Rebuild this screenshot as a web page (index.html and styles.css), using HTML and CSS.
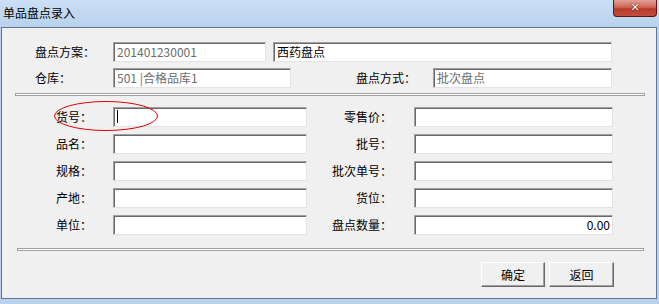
FILE: index.html
```html
<!DOCTYPE html>
<html>
	<head>
		<meta charset="UTF-8">
		<title>单品盘点录入</title>
		<link rel="stylesheet" href="styles.css">
	</head>
	<body>
		<div class="win">
			<div class="title">
				<span>单品盘点录入</span>
				<i class="close">&#x2715;</i>
			</div>
			<div class="client">
				<!--盘点方案-->
				<div class="head">
					<div class="row">
						<label class="lab">盘点方案：</label>
						<div class="field gray w1">201401230001</div>
						<div class="field w2">西药盘点</div>
					</div>
					<div class="row">
						<label class="lab">仓库：</label>
						<div class="field gray w3">501 |合格品库1</div>
						<label class="lab2">盘点方式：</label>
						<div class="field gray w4">批次盘点</div>
					</div>
				</div>
				<div class="line line1"></div>

				<!--商品信息-->
				<div class="form">
					<label>货号：</label>
					<div class="field"><em class="caret"></em></div>
					<label class="r">零售价：</label>
					<div class="field"></div>

					<label>品名：</label>
					<div class="field"></div>
					<label class="r">批号：</label>
					<div class="field"></div>

					<label>规格：</label>
					<div class="field"></div>
					<label class="r">批次单号：</label>
					<div class="field"></div>

					<label>产地：</label>
					<div class="field"></div>
					<label class="r">货位：</label>
					<div class="field"></div>

					<label>单位：</label>
					<div class="field"></div>
					<label class="r">盘点数量：</label>
					<div class="field num">0.00</div>
				</div>
				<div class="line line2"></div>

				<div class="btns">
					<button>确定</button>
					<button class="back">返回</button>
				</div>

				<svg class="mark" width="104" height="30" viewBox="0 0 104 30">
					<ellipse cx="52" cy="15" rx="51.5" ry="14.5" fill="none" stroke="#e00000" stroke-width="1"/>
				</svg>
			</div>
		</div>
	</body>
</html>
```
FILE: styles.css
```css
body{
	margin: 0;
	background: #bad2ec;
	font: 12px/20px "Noto Sans CJK SC", sans-serif;
	color: #000;
	overflow: hidden;
}
.win{
	width: 659px;
	height: 304px;
}
.title{
	height: 27px;
	display: flex;
	justify-content: space-between;
	align-items: flex-start;
	background: linear-gradient(#cbdff5, #b9d1ec);
}
.title span{
	padding-left: 3px;
	line-height: 26px;
}
.close{
	width: 44px;
	height: 17px;
	margin-right: 2px;
	box-sizing: border-box;
	border: 1px solid #5a1711;
	border-top: 0;
	border-radius: 0 0 4px 4px;
	background: linear-gradient(#e2a196, #cf6656 45%, #b83a2c 55%, #c34d3e);
	color: #fff;
	font: bold 11px/16px "DejaVu Sans", sans-serif;
	font-style: normal;
	text-align: center;
	text-shadow: 0 0 1px #4a0c05, 0 0 1px #4a0c05;
}
.client{
	position: relative;
	width: 654px;
	height: 270px;
	margin-left: 1px;
	border: 1px solid #62778f;
	background: #f0f0f0;
}
.head{
	padding: 14px 0 0 33px;
	display: flex;
	flex-direction: column;
	gap: 6px;
}
.row{
	display: flex;
	height: 20px;
}
.lab{
	width: 78px;
}
.lab2{
	width: 125px;
	padding-right: 17px;
	text-align: right;
}
.field{
	box-sizing: border-box;
	height: 20px;
	padding: 0 3px;
	background: #fff;
	border-top: 1px solid #a0a0a0;
	border-left: 1px solid #a0a0a0;
	border-right: 1px solid #e3e3e3;
	border-bottom: 1px solid #e3e3e3;
	box-shadow: inset 1px 1px 0 #696969;
	line-height: 18px;
	white-space: nowrap;
}
.gray{
	color: #6d6d6d;
}
.w1{
	width: 153px;
	margin-right: 7px;
}
.w2{
	width: 339px;
}
.w3{
	width: 178px;
}
.w4{
	width: 179px;
}
.line{
	height: 1px;
	background: #fff;
	border: 1px solid #a0a0a0;
}
.line1{
	margin: 5px 0 0 13px;
	width: 628px;
}
.line2{
	margin: 13px 0 0 15px;
	width: 625px;
}
.form{
	display: grid;
	grid-template-columns: 57px 194px 107px 199px;
	grid-auto-rows: 20px;
	row-gap: 7px;
	margin-top: 11px;
	padding-left: 54px;
}
.form .r{
	text-align: right;
	padding-right: 22px;
}
.num{
	text-align: right;
	padding-right: 2px;
}
.caret{
	display: inline-block;
	width: 1px;
	height: 13px;
	margin-top: 2px;
	vertical-align: top;
	background: #000;
}
.btns{
	display: flex;
	gap: 4px;
	margin-top: 11px;
	padding-left: 479px;
}
.btns button{
	width: 64px;
	height: 25px;
	padding: 0;
	background: #f0f0f0;
	border-top: 1px solid #fff;
	border-left: 1px solid #fff;
	border-right: 1px solid #696969;
	border-bottom: 1px solid #696969;
	box-shadow: inset -1px -1px 0 #a0a0a0;
	font: 12px "Noto Sans CJK SC", sans-serif;
	color: #000;
}
.btns .back{
	width: 65px;
}
.mark{
	position: absolute;
	left: 52px;
	top: 73px;
}
```
